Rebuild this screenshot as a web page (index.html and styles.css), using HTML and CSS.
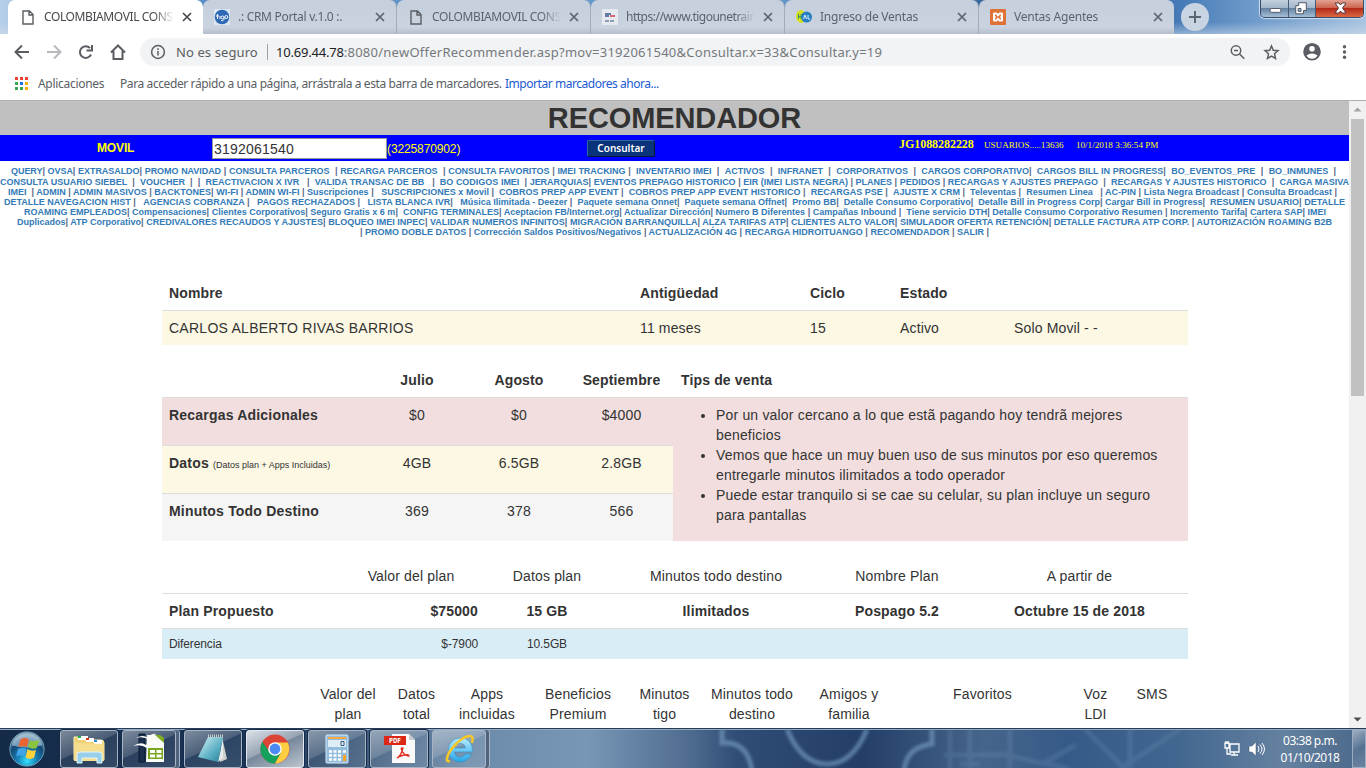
FILE: index.html
```html
<!DOCTYPE html>
<html lang="es">
<head>
<meta charset="utf-8">
<title>COLOMBIAMOVIL CONSULTAS</title>
<link rel="stylesheet" href="styles.css">
</head>
<body>
<svg width="0" height="0" class="defs">
  <defs>
    <symbol id="close" viewBox="0 0 10 10"><path d="M1 1l8 8M9 1L1 9" stroke="currentColor" stroke-width="1.7" fill="none"/></symbol>
    <symbol id="page" viewBox="0 0 12 15"><path d="M1 1h6.5L11 4.500V14H1zM7 1v4h4" stroke="#5a5e63" stroke-width="1.4" fill="none"/></symbol>
  </defs>
</svg>
<div class="screen">
  <header class="tabstrip">
    <div class="tab active"><svg class="fav doc"><use href="#page"/></svg><span class="title">COLOMBIAMOVIL CONS</span><svg class="x"><use href="#close"/></svg></div>
    <div class="tab"><svg class="fav" viewBox="0 0 16 16"><path fill="#dce6f2" d="M0 0h16v16H0z"/><circle cx="8" cy="8" r="7.300" fill="#2d69b5"/><path d="M3.500 5v5M2 7h3M6 7v3" stroke="#fff"/><circle cx="8.500" cy="8.500" r="1.500" fill="none" stroke="#fff"/><path d="M10 8.500v2q-1 2-3 1" stroke="#fff" fill="none"/><circle cx="12.300" cy="8" r="1.500" fill="none" stroke="#fff"/></svg><span class="title crm">.: CRM Portal v.1.0 :.</span><svg class="x"><use href="#close"/></svg></div>
    <div class="tab"><svg class="fav doc"><use href="#page"/></svg><span class="title">COLOMBIAMOVIL CONS</span><svg class="x"><use href="#close"/></svg></div>
    <div class="tab"><svg class="fav" viewBox="0 0 16 16"><path fill="#e6eaf0" d="M0 0h16v16H0z"/><path d="M3 5h6M3 7h4" stroke="#39558a" stroke-width="1.500"/><path d="M8 7h5" stroke="#d23b4b" stroke-width="1.500"/><path d="M3 12h10" stroke="#7084a2" stroke-width="1.500" stroke-dasharray="4 1"/></svg><span class="title web">https://www.tigounetrain</span><svg class="x"><use href="#close"/></svg></div>
    <div class="tab"><svg class="fav" viewBox="0 0 16 16"><ellipse cx="5" cy="7.500" rx="5" ry="6.500" fill="#d5df1e"/><circle cx="10.500" cy="8" r="5.500" fill="#247fc4"/><path d="M2.500 5v5M5 5v5M2.500 7.500H5" stroke="#34906d"/><path d="M7.500 10l1.500-4 1.500 4M12 6v4h2" stroke="#e6f0fb" fill="none"/></svg><span class="title ing">Ingreso de Ventas</span><svg class="x"><use href="#close"/></svg></div>
    <div class="tab"><svg class="fav" viewBox="0 0 16 16"><rect width="16" height="16" rx="1" fill="#de7237"/><path d="M8 6.500L6.500 4.500H4v3l1 .500-1 .500v3h2.500L8 9.500l1.500 2H12v-3L11 8l1-.500v-3H9.500z" fill="#de7237" stroke="#fff" stroke-width="1.900" stroke-linejoin="round"/></svg><span class="title ven">Ventas Agentes</span><svg class="x"><use href="#close"/></svg></div>
    <div class="newtab"><svg viewBox="0 0 28 28"><circle cx="14" cy="14" r="14" fill="#c9d4e2"/><path d="M14 8v12M8 14h12" stroke="#5c6672" stroke-width="2"/></svg></div>
    <div class="winbtns">
      <span class="wb min"><svg viewBox="0 0 28 17"><rect x="9.500" y="8.500" width="11" height="4" rx="1" fill="#fff" stroke="#535766"/></svg></span>
      <span class="wb"><svg viewBox="0 0 27 17"><path d="M10 2.500h8v8h-3V14H7V5.500h3z" fill="#fff" stroke="#4d5363"/><path d="M9.500 8.500h3v3h-3z" fill="#8fabc9" stroke="#4d5363"/></svg></span>
      <span class="wb red"><svg viewBox="0 0 47 17"><path d="M19 3h4l1.500 2L26 3h4l-3.500 5 3.500 5h-4l-1.500-2-1.500 2h-4l3.500-5z" fill="#fff" stroke="#593a42"/></svg></span>
    </div>
  </header>

  <section class="toolbar">
    <div class="navrow">
      <svg class="navicons" viewBox="0 0 138 28" fill="none" stroke="#5a5e63" stroke-width="2"><path d="M29 14H16M22 7.500L15.500 14l6.500 6.500"/><path stroke="#b8b9bc" d="M47 14h13M54 7.500l6.500 6.500-6.500 6.500"/><path d="M90 10.200a5.800 5.800 0 1 0 1 6.300M92 7v5.500h-5.500"/><path d="M111 14.500l7-7 7 7M113.500 13v8h9v-8"/></svg>
      <div class="omnibox">
        <svg class="siteinfo" viewBox="0 0 16 16" fill="none" stroke="#5a5e63" stroke-width="1.500"><circle cx="8" cy="8" r="6.400"/><path d="M8 7v4.500M8 4.300V6"/></svg>
        <span class="unsafe">No es seguro</span><span class="bar"></span>
        <span class="url"><b>10.69.44.78</b>:8080/newOfferRecommender.asp?mov=3192061540&amp;Consultar.x=33&amp;Consultar.y=19</span>
        <svg class="omniend" viewBox="0 0 60 28" fill="none" stroke="#5a5e63" stroke-width="1.500"><circle cx="12" cy="12.500" r="4.700"/><path d="M10 12.500h4M15.300 15.800l5 5"/><path d="M47.500 8l1.800 4.300 4.700.4-3.500 3.100 1 4.600-4-2.400-4 2.400 1-4.600-3.500-3.100 4.700-.4z"/></svg>
      </div>
      <svg class="userend" viewBox="0 0 76 28" fill="#5a5e63"><circle cx="22" cy="13.800" r="8.800"/><circle cx="22" cy="10.800" r="2.800" fill="#fff"/><path d="M16.500 17.500q5.500-4 11 0-2 3.300-5.500 3.300t-5.500-3.300" fill="#fff"/><circle cx="54.500" cy="8.800" r="1.700"/><circle cx="54.500" cy="14" r="1.700"/><circle cx="54.500" cy="19.200" r="1.700"/></svg>
    </div>
    <div class="bookmarks">
      <svg class="apps" viewBox="0 0 13 13"><path d="M0 0h3v3H0zM5 0h3v3H5zM10 0h3v3h-3z" fill="#ea4335"/><path d="M0 5h3v3H0zM0 10h3v3H0zM5 10h3v3H5z" fill="#34a853"/><path d="M5 5h3v3H5z" fill="#1a73e8"/><path d="M10 5h3v3h-3zM10 10h3v3h-3z" fill="#f9ab00"/></svg>
      <span class="apl">Aplicaciones</span><span class="hint">Para acceder rápido a una página, arrástrala a esta barra de marcadores.</span><span class="import">Importar marcadores ahora...</span>
    </div>
  </section>

  <section class="viewport">
    <main class="page">
      <h1>RECOMENDADOR</h1>
      <form class="search">
        <label>MOVIL</label>
        <span class="number">3192061540</span><span class="alt">(3225870902)</span>
        <span class="go">Consultar</span>
        <span class="agent">JG1088282228</span><span class="users">USUARIOS.....13636</span><span class="when">10/1/2018 3:36:54 PM</span>
      </form>
      <nav class="menu">
        <div class="l1">QUERY<i>|</i> OVSA<i>|</i> EXTRASALDO<i>|</i> PROMO NAVIDAD <i>|</i> CONSULTA PARCEROS &nbsp;<i>|</i> RECARGA PARCEROS &nbsp;<i>|</i> CONSULTA FAVORITOS <i>|</i> IMEI TRACKING <i>|</i> &nbsp;INVENTARIO IMEI &nbsp;<i>|</i> &nbsp;ACTIVOS &nbsp;<i>|</i> &nbsp;INFRANET &nbsp;<i>|</i> &nbsp;CORPORATIVOS &nbsp;<i>|</i> &nbsp;CARGOS CORPORATIVO<i>|</i> &nbsp;CARGOS BILL IN PROGRESS<i>|</i> &nbsp;BO_EVENTOS_PRE &nbsp;<i>|</i> &nbsp;BO_INMUNES &nbsp;<i>|</i></div>
        <div class="l2">CONSULTA USUARIO SIEBEL &nbsp;<i>|</i> &nbsp;VOUCHER &nbsp;<i>|</i> &nbsp;<i>|</i> &nbsp;REACTIVACION X IVR &nbsp;&nbsp;<i>|</i> &nbsp;VALIDA TRANSAC DE BB &nbsp;&nbsp;<i>|</i> &nbsp;BO CODIGOS IMEI &nbsp;<i>|</i> JERARQUIAS<i>|</i> EVENTOS PREPAGO HISTORICO <i>|</i> EIR (IMEI LISTA NEGRA) <i>|</i> PLANES <i>|</i> PEDIDOS <i>|</i> RECARGAS Y AJUSTES PREPAGO &nbsp;<i>|</i> &nbsp;RECARGAS Y AJUSTES HISTORICO &nbsp;<i>|</i> &nbsp;CARGA MASIVA</div>
        <div class="l3">IMEI &nbsp;<i>|</i> ADMIN <i>|</i> ADMIN MASIVOS <i>|</i> BACKTONES<i>|</i> WI-FI <i>|</i> ADMIN WI-FI <i>|</i> Suscripciones <i>|</i> &nbsp;&nbsp;SUSCRIPCIONES x Movil <i>|</i> &nbsp;COBROS PREP APP EVENT <i>|</i> &nbsp;COBROS PREP APP EVENT HISTORICO <i>|</i> &nbsp;RECARGAS PSE <i>|</i> &nbsp;AJUSTE X CRM <i>|</i> &nbsp;Televentas <i>|</i> &nbsp;Resumen Linea &nbsp;&nbsp;<i>|</i> AC-PIN <i>|</i> Lista Negra Broadcast <i>|</i> Consulta Broadcast <i>|</i></div>
        <div class="l4">DETALLE NAVEGACION HIST <i>|</i> &nbsp;&nbsp;AGENCIAS COBRANZA <i>|</i> &nbsp;&nbsp;PAGOS RECHAZADOS <i>|</i> &nbsp;&nbsp;LISTA BLANCA IVR<i>|</i> &nbsp;&nbsp;Música Ilimitada - Deezer <i>|</i> &nbsp;Paquete semana Onnet<i>|</i> &nbsp;Paquete semana Offnet<i>|</i> &nbsp;Promo BB<i>|</i> &nbsp;Detalle Consumo Corporativo<i>|</i> &nbsp;Detalle Bill in Progress Corp<i>|</i> Cargar Bill in Progress<i>|</i> &nbsp;RESUMEN USUARIO<i>|</i> DETALLE</div>
        <div class="l5">ROAMING EMPLEADOS<i>|</i> Compensaciones<i>|</i> Clientes Corporativos<i>|</i> Seguro Gratis x 6 m<i>|</i> &nbsp;CONFIG TERMINALES<i>|</i> Aceptacion FB/Internet.org<i>|</i> Actualizar Dirección<i>|</i> Numero B Diferentes <i>|</i> Campañas Inbound <i>|</i> &nbsp;Tiene servicio DTH<i>|</i> Detalle Consumo Corporativo Resumen <i>|</i> Incremento Tarifa<i>|</i> Cartera SAP<i>|</i> IMEI</div>
        <div class="l6">Duplicados<i>|</i> ATP Corporativo<i>|</i> CREDIVALORES RECAUDOS Y AJUSTES<i>|</i> BLOQUEO IMEI INPEC<i>|</i> VALIDAR NUMEROS INFINITOS<i>|</i> MIGRACIÓN BARRANQUILLA<i>|</i> ALZA TARIFAS ATP<i>|</i> CLIENTES ALTO VALOR<i>|</i> SIMULADOR OFERTA RETENCIÓN<i>|</i> DETALLE FACTURA ATP CORP. <i>|</i> AUTORIZACIÓN ROAMING B2B</div>
        <div class="l7"><i>|</i> PROMO DOBLE DATOS <i>|</i> Corrección Saldos Positivos/Negativos <i>|</i> ACTUALIZACIÓN 4G <i>|</i> RECARGA HIDROITUANGO <i>|</i> RECOMENDADOR <i>|</i> SALIR <i>|</i></div>
      </nav>

      <div class="tables">
        <div class="customer">
          <div class="row head"><span>Nombre</span><span>Antigüedad</span><span>Ciclo</span><span>Estado</span><span></span></div>
          <div class="row warn line"><span class="name">CARLOS ALBERTO RIVAS BARRIOS</span><span>11 meses</span><span>15</span><span>Activo</span><span>Solo Movil - -</span></div>
        </div>
        <div class="usage">
          <div class="row head"><span></span><span>Julio</span><span>Agosto</span><span>Septiembre</span><span class="tipshead">Tips de venta</span></div>
          <div class="usagebody">
            <div class="months">
              <div class="row danger line"><b>Recargas Adicionales</b><span>$0</span><span>$0</span><span>$4000</span></div>
              <div class="row warn line"><b>Datos <small>(Datos plan + Apps Incluidas)</small></b><span>4GB</span><span>6.5GB</span><span>2.8GB</span></div>
              <div class="row plain line"><b>Minutos Todo Destino</b><span>369</span><span>378</span><span>566</span></div>
            </div>
            <ul class="tips">
              <li>Por un valor cercano a lo que estã pagando hoy tendrã mejores<br>beneficios</li>
              <li>Vemos que hace un muy buen uso de sus minutos por eso queremos<br>entregarle minutos ilimitados a todo operador</li>
              <li>Puede estar tranquilo si se cae su celular, su plan incluye un seguro<br>para pantallas</li>
            </ul>
          </div>
        </div>
        <div class="plan">
          <div class="row"><span></span><span>Valor del plan</span><span>Datos plan</span><span>Minutos todo destino</span><span>Nombre Plan</span><span>A partir de</span></div>
          <div class="row bold line"><span class="left">Plan Propuesto</span><span class="right">$75000</span><span>15 GB</span><span>Ilimitados</span><span>Pospago 5.2</span><span>Octubre 15 de 2018</span></div>
          <div class="row diff line"><span class="left">Diferencia</span><span class="right">$-7900</span><span>10.5GB</span><span></span><span></span><span></span></div>
        </div>
        <div class="offers">
          <span></span><span>Valor del<br>plan</span><span>Datos<br>total</span><span>Apps<br>incluidas</span><span>Beneficios<br>Premium</span><span>Minutos<br>tigo</span><span>Minutos todo<br>destino</span><span>Amigos y<br>familia</span><span>Favoritos</span><span>Voz<br>LDI</span><span>SMS</span>
        </div>
      </div>
    </main>
    <aside class="scroll">
      <svg viewBox="0 0 17 17"><path d="M4.500 10.500L8.500 6.500l4 4z" fill="#a3a3a3"/></svg>
      <div class="thumb"></div>
      <svg class="down" viewBox="0 0 17 17"><path d="M4.500 6.500h8l-4 4z" fill="#505050"/></svg>
    </aside>
  </section>

  <footer class="taskbar">
    <svg class="wall" viewBox="0 0 1366 40" preserveAspectRatio="none" fill="none">
      <defs><filter id="soft"><feGaussianBlur stdDeviation="1.5"/></filter></defs>
      <g filter="url(#soft)" stroke="#7aa0c4" stroke-width="5" opacity=".6"><path d="M722 0v14q26-2 30 28M787 0q14 35 40 35t40-35M904 42q2-24 28-27V0"/><g stroke-width="5" opacity=".35"><path d="M950 0v40M970 0v40M1010 0v40M944 26h70M1040 36l36-20M1085 0l40 40M1130 0v40M1180 0l-60 40M960 35h20M1000 25l70 15"/></g></g>
    </svg>
    <svg class="start" viewBox="0 0 40 40"><defs><radialGradient id="orb" cx=".5" cy=".85" r=".75"><stop offset="0" stop-color="#35e0ff"/><stop offset=".4" stop-color="#167cb2"/><stop offset=".75" stop-color="#154875"/><stop offset="1" stop-color="#7799af"/></radialGradient></defs><circle cx="20" cy="20" r="18" fill="url(#orb)" stroke="#73a6bd"/><path d="M4 16a16.500 16.500 0 0 1 32 0q-16 5-32 0" fill="#c2dbea" opacity=".55"/><path d="M13 10q5-3 9 0l-2 8q-4-2-9 0z" fill="#eb6532"/><path d="M23 11q4 2 10-1l-3 9q-4 2-9-1z" fill="#8dc43d"/><path d="M10.500 20q5-2 9 0l-2 8q-4-3-9 0z" fill="#43a4e8"/><path d="M20.500 20q4 3 9 1l-2 8q-4 3-9 0z" fill="#ffd13b"/></svg>
    <div class="task"><svg viewBox="0 0 36 32"><path d="M3 4h9l2 3h16q3 0 3 3v17H3z" fill="#efd277" stroke="#fff0ac"/><path d="M7 3h10v4H7z" fill="#fff"/><path d="M7 3h3v2H7z" fill="#17b64c"/><path d="M15 5h8v4h-8z" fill="#fff"/><path d="M15 5h3v2h-3z" fill="#e3331c"/><path d="M23 7h8v4h-8z" fill="#fff"/><path d="M23 7h3v2h-3z" fill="#2d88df"/><path d="M3 10l30 1v17H3z" fill="#f5de8e"/><path d="M6 30v-8q0-3 3-3h19q3 0 3 3v8h-5v-5H11v5z" fill="#9acfe9" stroke="#e2f6ff"/></svg></div>
    <div class="task stacked"><svg viewBox="0 0 36 32"><path d="M8 1h6v28H8z" fill="#1a2f4c" stroke="#081a31"/><path d="M16 2h10l7 7v20H15z" fill="#f9fbf5"/><path d="M24 2l9 8v-5l-4-3z" fill="#80ad20"/><path d="M17 15h15v11H17z" fill="#78a71e"/><path d="M19 17h5v3h-5zM25.500 17h5v3h-5zM19 21.500h5v3h-5zM25.500 21.500h5v3h-5z" fill="#fff"/><path d="M5 5q7-4 12 0 3-5 9-4-6 1-8 6-5-4-13-2M2 13q8-5 13-1 4-5 11-4-7 1-10 7-6-4-14-2" fill="#fff"/></svg></div>
    <div class="task"><svg viewBox="0 0 36 32"><defs><linearGradient id="note" x2="1" y2="1"><stop stop-color="#d7f5f7"/><stop offset=".6" stop-color="#5aafc4"/><stop offset="1" stop-color="#268198"/></linearGradient></defs><path d="M27 4l5 22-7 3z" fill="#d0d0ca"/><path d="M13 4h15l-5 25-20-5z" fill="url(#note)"/><path d="M13 3h16" stroke="#c8cdca" stroke-width="3" stroke-dasharray="1 1"/><path d="M23 29l5-22v18z" fill="#e4ecec"/></svg></div>
    <div class="task current"><svg viewBox="0 0 36 32"><circle cx="18" cy="16" r="14.500" fill="#db4437"/><path d="M5.400 8.700A14.500 14.500 0 0 0 18 30.500l6-11H13z" fill="#16a05d"/><path d="M18 30.500A14.500 14.500 0 0 0 30.700 9.500H18l6 10z" fill="#ffcd42"/><circle cx="18" cy="16" r="6.800" fill="#fff"/><circle cx="18" cy="16" r="5.400" fill="#4c8bf5"/></svg></div>
    <div class="task"><svg viewBox="0 0 36 32"><rect x="7" y="2" width="22" height="28" rx="1" fill="#93bddc" stroke="#d4ebfb"/><path d="M9 4h18v2H9z" fill="#f8a840"/><path d="M9 7h18v7H9z" fill="#deecf3"/><path d="M22 8.500h3v4h-3z" fill="none" stroke="#35587c"/><path d="M10 18.500h12M10 22.500h12M10 26.500h12" stroke="#fff" stroke-width="2.500" stroke-dasharray="3 1.500"/><path d="M24 18.500h3" stroke="#fff" stroke-width="2.500"/><path d="M24 22h3v6h-3z" fill="#fba424"/></svg></div>
    <div class="task"><svg viewBox="0 0 36 32"><path d="M11 1h17l6 6v23H11z" fill="#fafafa"/><path d="M28 1v6h6z" fill="#c7cbd0"/><rect x="3" y="3" width="22" height="9" fill="#dd2716"/><text x="8" y="10" font-family="DejaVu Sans" font-size="7" font-weight="bold" fill="#fff" textLength="12" lengthAdjust="spacingAndGlyphs">PDF</text><path d="M16 25q4-2 6-10-3-1-1 3 3 5 7 5 0-2-5-1-5 1-7 3z" fill="none" stroke="#e22d25" stroke-width="1.300"/></svg></div>
    <div class="task stacked"><svg viewBox="0 0 36 32"><defs><linearGradient id="ie" x2="0" y2="1"><stop stop-color="#b5ecff"/><stop offset="1" stop-color="#26a5e8"/></linearGradient></defs><path d="M19 5a12 12 0 1 0 11.500 16h-6.500q-1.500 3-5 3-5 0-5.500-5h18q.3-14-12.500-14zm-5.500 10q.8-4.500 5.500-4.500t5.500 4.500z" fill="url(#ie)" stroke="#2a87bd" stroke-width=".5"/><path d="M31 10q2-7-2-7-6 0-14 8T6 25q-1 4 3 3" fill="none" stroke="#f6c928" stroke-width="2.500"/></svg></div>
    <div class="tray">
      <svg class="net" viewBox="0 0 16 16" fill="none" stroke="#fff" stroke-width="1.300"><path d="M6 3h9v8H6zM10 11v3M7 14h7M1 2v5h4V2zM2 0v3M4 0v3M3 7v6h4"/></svg>
      <svg class="vol" viewBox="0 0 17 16"><path d="M1 5h3l4-4v14l-4-4H1z" fill="#fff" stroke="#465875" stroke-width=".5"/><path d="M10 5q2 3 0 6M12 3.500q4 4.500 0 9M14 2q5 6 0 12" fill="none" stroke="#fff"/></svg>
      <div class="clock"><span>03:38 p.m.</span><span>01/10/2018</span></div>
      <div class="peek"></div>
    </div>
  </footer>
</div>
</body>
</html>
```
FILE: styles.css
```css
* { box-sizing: border-box; }
body { margin: 0; background: #fff; overflow: hidden; }
.defs { position: absolute; }
svg { display: block; flex: none; }
.screen { width: 1366px; height: 768px; display: grid; grid-template-rows: 34px 66px 628px 40px; font-family: "Noto Sans", sans-serif; }

/* Browser tabs */
.tabstrip { display: flex; padding-left: 8px; overflow: hidden; background: linear-gradient(#ffffff00 65%, #d2deea88), linear-gradient(90deg, #b5cee9 0, #5b8dc3 15%, #6c9dcc 55%, #315f97 75%, #4479b6 86%, #709ccb 92%, #a9c4e1); }
.tab { width: 194px; height: 34px; display: flex; align-items: center; padding: 0 11px; background: linear-gradient(#c5cfdd, #cad3df 80%, #b5bfcb); border-right: 1px solid #a2acb9; border-radius: 7px 7px 0 0; color: #5a6370; }
.tab.active { width: 195px; background: #fff; padding-left: 13px; border: 0; color: #45484c; }
.tab:nth-child(6) { width: 195px; border-right: 0; }
.fav { width: 16px; height: 16px; }
.fav.doc { width: 12px; height: 15px; margin: 0 2px; }
.tab.active .fav.doc { margin-left: 1px; }
.title { width: 131px; height: 18px; margin-left: 8px; overflow: hidden; white-space: nowrap; font-size: 12px; line-height: 18px; letter-spacing: -.4px; -webkit-mask-image: linear-gradient(90deg, #000 85%, transparent); mask-image: linear-gradient(90deg, #000 85%, transparent); }
.active .title { width: 130px; }
.crm { letter-spacing: -.3px; }
.web { letter-spacing: -.5px; }
.ing, .ven { letter-spacing: -.22px; }
.x { width: 10px; height: 10px; margin-left: 8px; }
.newtab { width: 28px; margin: 3px 0 0 7px; }
.newtab svg { width: 28px; height: 28px; }
.winbtns { display: flex; height: 18px; margin: 0 2px 0 auto; border: 1px solid #394c66; border-top: 0; border-radius: 0 0 5px 5px; overflow: hidden; box-shadow: 0 0 1px 1px #cbddf1; }
.wb { width: 27px; height: 17px; background: linear-gradient(#c2cfdd, #a3b7cb 45%, #6683a3 50%, #a3bfd7); border-right: 1px solid #485b75; }
.wb.min { width: 28px; }
.wb.red { width: 47px; border: 0; background: linear-gradient(#e3a191, #cd6551 45%, #b32b18 50%, #dc6843); }
.wb svg { height: 17px; width: 100%; }

/* Address and bookmarks */
.toolbar { background: #fff; }
.navrow { height: 36px; padding-top: 4px; display: flex; }
.navicons { width: 138px; height: 28px; }
.omnibox { margin-left: 2px; width: 1150px; height: 28px; display: flex; align-items: center; background: #f1f3f4; border-radius: 14px; padding: 0 6px 0 10px; }
.siteinfo { width: 16px; height: 16px; }
.unsafe { width: 82px; margin-left: 10px; font-size: 13px; letter-spacing: .1px; color: #5a5e63; white-space: nowrap; }
.bar { width: 1px; height: 16px; background: #9da0a4; margin: 0 8px 0 9px; }
.url { font-size: 13px; letter-spacing: .25px; white-space: nowrap; color: #75797d; }
.url b { color: #202124; font-weight: 400; letter-spacing: -.2px; }
.omniend { width: 60px; height: 28px; margin-left: auto; }
.userend { width: 76px; height: 28px; }
.bookmarks { height: 27px; display: flex; align-items: center; padding-left: 15px; font-size: 12px; color: #5a5e63; white-space: nowrap; }
.apps { width: 13px; height: 13px; }
.apl { width: 66px; margin-left: 10px; letter-spacing: -.3px; }
.hint { width: 381px; margin-left: 16px; letter-spacing: -.4px; }
.import { margin-left: 4px; color: #1a5ad2; letter-spacing: -.46px; }

/* Web page */
.viewport { display: flex; border-top: 1px solid #abb0b0; overflow: hidden; font-family: "Liberation Sans", sans-serif; color: #333; }
.page { width: 1349px; height: 627px; overflow: hidden; background: #fff; }
h1 { margin: 0; height: 34px; background: #c0c0c0; font-size: 29px; line-height: 34px; text-align: center; letter-spacing: -.1px; }
.search { height: 26px; display: flex; align-items: center; background: #00f; color: #ff0; white-space: nowrap; }
.search label { margin-left: 97px; width: 115px; font-size: 12px; font-weight: 700; letter-spacing: -.15px; }
.number { width: 175px; height: 21px; background: #fff; border: 1px solid #999; color: #333; font-size: 14px; line-height: 20px; padding-left: 1px; letter-spacing: .22px; }
.alt { width: 200px; font-size: 12px; padding-top: 2px; letter-spacing: -.12px; }
.go { width: 68px; height: 17px; border: 1px solid; border-color: #28699e #02163c #02163c #28699e; border-radius: 2px; background: #09337b; color: #fff; font: 600 10px/14px "Noto Sans", sans-serif; text-align: center; }
.agent { margin-left: 244px; width: 85px; height: 22px; font: 700 12px/14px "Liberation Serif", serif; letter-spacing: -.05px; }
.users, .when { font: 9.100px/14px "Liberation Serif", serif; height: 20px; }
.users { width: 92px; }
.menu { height: 76px; padding-top: 5px; color: #337ab7; font-size: 9px; font-weight: 700; line-height: 10px; }
.menu i { font-style: normal; color: #5a6a88; }
.menu div { text-align: justify; text-align-last: justify; height: 10px; }
.menu .l1 { margin-left: 11px; width: 1325px; height: 11px; letter-spacing: -.06px; }
.menu .l2 { margin-left: 0; width: 1349px; letter-spacing: -.01px; }
.menu .l3 { margin-left: 8px; width: 1329px; }
.menu .l4 { margin-left: 4px; width: 1341px; }
.menu .l5 { margin-left: 24px; width: 1302px; }
.menu .l6 { margin-left: 17px; width: 1315px; }
.menu .l7 { margin-left: 360px; width: 629px; }

/* Customer and plan tables */
.tables { width: 1026px; margin: 38px 0 0 162px; font-size: 14px; line-height: 20px; letter-spacing: .15px; display: flex; flex-direction: column; gap: 17px; }
.row { display: grid; height: 35px; padding-top: 8px; white-space: nowrap; }
.row.line { border-top: 1px solid #ddd; padding-top: 7px; }
.head { font-weight: 700; }
.name { letter-spacing: .26px; }
.warn { background: #fcf8e3; }
.danger { background: #f2dede; }
.plain { background: #f5f5f5; }
.customer .row { grid-template-columns: 471px 170px 90px 114px 1fr; padding-left: 7px; }
.usage .row { grid-template-columns: 204px 102px 102px 103px 1fr; text-align: center; }
.usage .tipshead { text-align: left; padding-left: 8px; }
.usagebody { display: flex; }
.months { width: 511px; }
.months .row { height: 48px; grid-template-columns: 204px 102px 102px 103px; }
.months b { text-align: left; padding-left: 7px; letter-spacing: .2px; }
.months small { font-size: 9px; font-weight: 400; letter-spacing: 0; }
.tips { width: 515px; margin: 0; padding: 7px 0 0 43px; background: #f2dede; border-top: 1px solid #ddd; white-space: nowrap; letter-spacing: .18px; }
.plan .row { grid-template-columns: 175px 148px 124px 214px 148px 217px; text-align: center; }
.plan .left { text-align: left; padding-left: 7px; }
.plan .right { text-align: right; padding-right: 7px; }
.bold { font-weight: 700; }
.plan .row.diff { height: 31px; background: #d9edf7; font-size: 12px; padding-top: 5px; letter-spacing: -.12px; }
.offers { display: grid; grid-template-columns: 152px 68px 69px 72px 110px 63px 112px 82px 185px 41px 1fr; text-align: center; white-space: nowrap; padding-top: 8px; }
.scroll { width: 17px; height: 627px; background: #f1f1f1; display: flex; flex-direction: column; }
.scroll svg { width: 17px; height: 17px; }
.thumb { width: 13px; height: 277px; margin: 1px 2px; background: #c1c1c1; }
.scroll .down { margin-top: auto; }

/* Desktop taskbar */
.taskbar { position: relative; display: flex; align-items: center; overflow: hidden; border-top: 1px solid #293e56; box-shadow: inset 0 1px #93acc3; background: linear-gradient(90deg, #142a47 0, #1a3558 18%, #304c6e 24%, #6b89a8 34%, #7896b5 43%, #526f93 50%, #304d76 54%, #233e67 63%, #46658b 72%, #365a87 78%, #41668f 86%, #6581a0 94%, #496789); }
.wall { position: absolute; top: 0; left: 0; width: 1366px; height: 40px; }
.start { position: relative; width: 40px; height: 38px; margin: 0 13px 0 7px; }
.task { position: relative; display: flex; justify-content: center; align-items: center; width: 58px; height: 38px; margin-right: 4px; border: 1px solid #a8b4c4; border-radius: 3px; background: linear-gradient(155deg, #ffffff70 0, #ffffff38 45%, #ffffff16 47%, #ffffff20); box-shadow: 0 0 0 1px #142b4b; }
.task svg { width: 36px; height: 32px; }
.task.current { background: linear-gradient(155deg, #d9e0e8 0, #98a4b4 45%, #77879a 47%, #bcc5cf); border-color: #e3e9ef; }
.task.stacked { width: 54px; margin-right: 8px; box-shadow: 3px 0 0 #50647d, 4px 0 0 #a8b4c4; }
.tray { position: relative; margin-left: auto; height: 39px; display: flex; align-items: center; color: #fff; }
.net { width: 16px; height: 16px; }
.vol { width: 17px; height: 16px; margin-left: 8px; }
.clock { width: 79px; margin-left: 7px; display: flex; flex-direction: column; align-items: center; font-size: 12px; line-height: 17px; letter-spacing: -.5px; padding-right: 3px; }
.peek { width: 14px; height: 38px; margin-left: 1px; border: 1px solid #9badc1; background: linear-gradient(150deg, #ffffff70, #ffffff10 50%, #ffffff30); }
```
